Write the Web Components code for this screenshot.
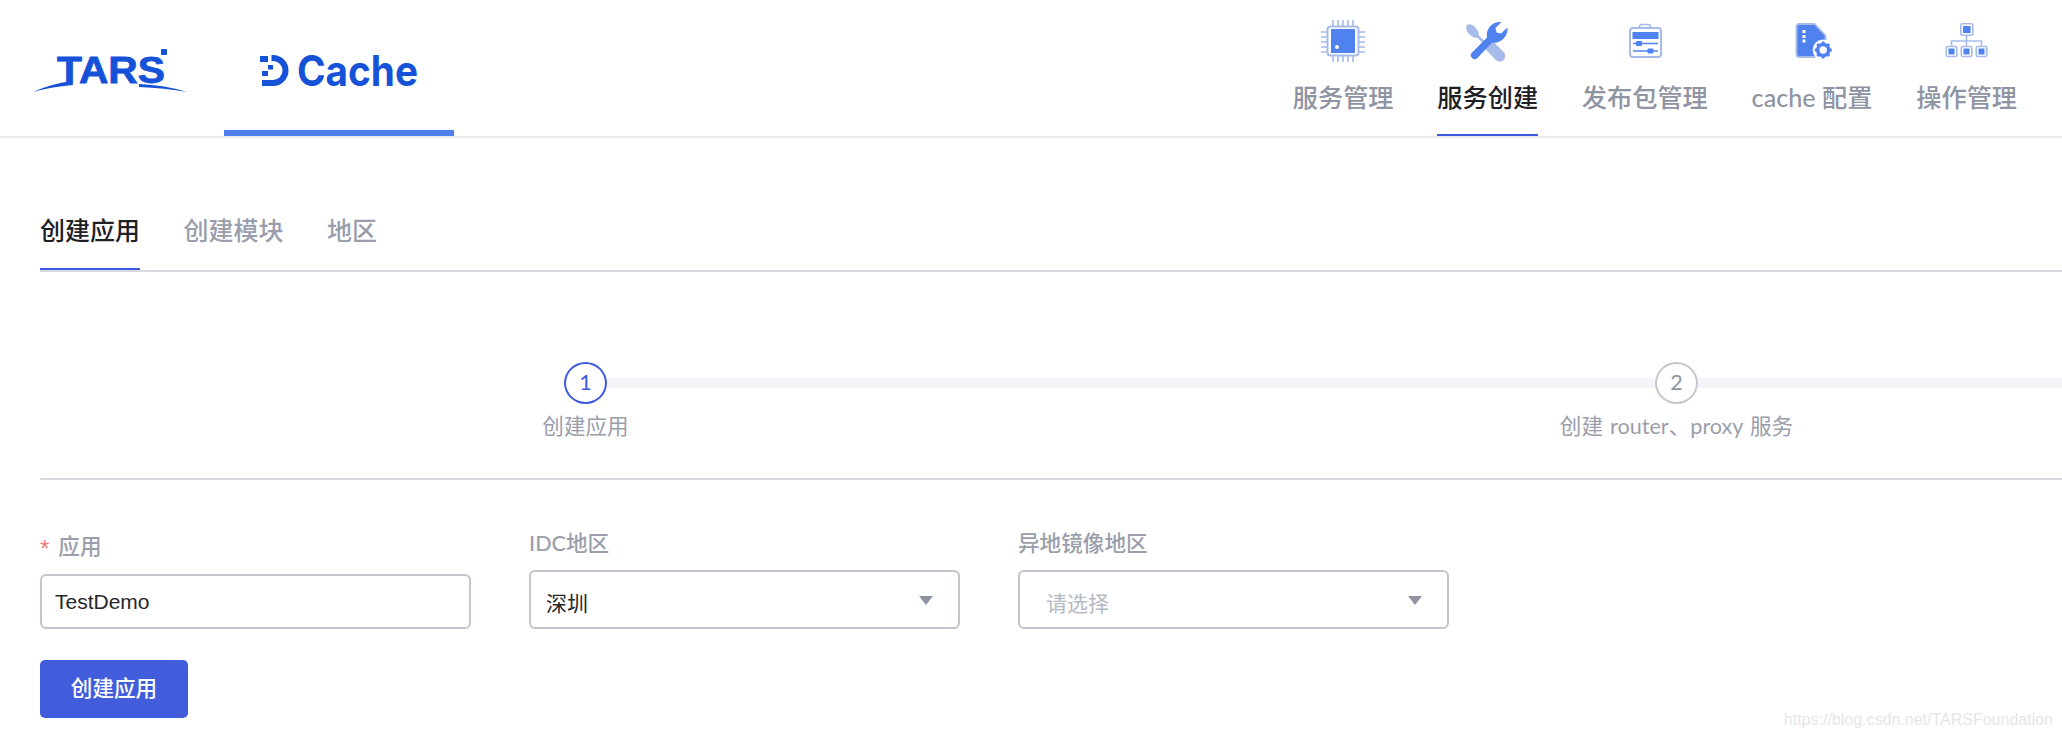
<!DOCTYPE html>
<html lang="zh">
<head>
<meta charset="utf-8">
<title>DCache</title>
<style>
  html, body { margin: 0; height: 738px; overflow: hidden; background: #fff; }
  body { position: relative; font-family: Lato, "Noto Sans CJK SC", sans-serif; color: #8f94a3; }
  .nav-icon { display: block; width: 44px; height: 44px; }
</style>
</head>
<body>
<app-header>
  <nav-item>
    <svg slot="icon" class="nav-icon" viewBox="0 0 44 44">
      <g stroke="#a6bbea" stroke-width="1.6" fill="none">
        <path d="M12 0v6M17 0v6M22 0v6M27 0v6M32 0v6M12 36v6M17 36v6M22 36v6M27 36v6M32 36v6M0 12h6M0 17h6M0 22h6M0 27h6M0 32h6M38 12h6M38 17h6M38 22h6M38 27h6M38 32h6"/>
        <rect x="6.5" y="6.5" width="31" height="29" rx="3" fill="#fff" stroke-width="2"/>
      </g>
      <rect x="10" y="9" width="24" height="24" fill="#4f82ee"/>
      <circle cx="16" cy="27" r="2" fill="#fff"/>
    </svg>
    服务管理
  </nav-item>
  <nav-item active>
    <svg slot="icon" class="nav-icon" viewBox="0 0 44 44">
      <path d="M7 12 L33.5 36.5" stroke="#a6bbea" stroke-width="2.6" fill="none"/>
      <ellipse cx="6.5" cy="11" rx="8" ry="4.6" transform="rotate(48 6.5 11)" fill="#a6bbea"/>
      <path d="M24.5 26.7 L33.8 36" stroke="#a6bbea" stroke-width="11" stroke-linecap="round" fill="none"/>
      <path d="M6 32.5 L21 17.5 C19.5 9 26 1 35.5 2 L29.5 8 L30.5 12.5 L35 13.5 L41.5 7.5 C42.5 17 34 24 26 22.5 L11.5 38 A3.8 3.8 0 0 1 6 32.5Z" fill="#4f82ee"/>
    </svg>
    服务创建
  </nav-item>
  <nav-item>
    <svg slot="icon" class="nav-icon" viewBox="0 0 44 44">
      <path d="M16.5 8 V7 a2.5 2.5 0 0 1 2.5 -2.5 h6 a2.5 2.5 0 0 1 2.5 2.5 V8" fill="none" stroke="#a6bbea" stroke-width="1.6"/>
      <rect x="7" y="8" width="31" height="29" rx="3" fill="#fff" stroke="#a6bbea" stroke-width="2"/>
      <rect x="9.5" y="12" width="26" height="7" fill="#4f82ee"/>
      <path d="M10 23.5h25M10 31h25" stroke="#4f82ee" stroke-width="1.5"/>
      <rect x="13" y="21" width="6" height="5" rx="1" fill="#4f82ee"/>
      <rect x="24.5" y="28.5" width="6" height="5" rx="1" fill="#4f82ee"/>
    </svg>
    发布包管理
  </nav-item>
  <nav-item>
    <svg slot="icon" class="nav-icon" viewBox="0 0 44 44">
      <path d="M9.5 4 H24.5 L35.5 15.5 V34 a3 3 0 0 1 -3 3 H9.5 a3 3 0 0 1 -3 -3 V7 a3 3 0 0 1 3 -3Z" fill="#4f82ee" stroke="#a6bbea" stroke-width="1.8"/>
      <path d="M12.5 10h3v3h-3zM12.5 15h3v3h-3zM12.5 19.5h3v3h-3z" fill="#fff"/>
      <circle cx="33.2" cy="30" r="10.5" fill="#fff"/>
      <circle cx="33.2" cy="30" r="5.5" fill="none" stroke="#4f82ee" stroke-width="3.6"/>
      <path d="M33.2 21.5v3M33.2 35.5v3M24.7 30h3M38.7 30h3M27.2 24l2.1 2.1M37.1 33.9l2.1 2.1M27.2 36l2.1-2.1M37.1 26.1l2.1-2.1" stroke="#4f82ee" stroke-width="2.8"/>
    </svg>
    cache 配置
  </nav-item>
  <nav-item>
    <svg slot="icon" class="nav-icon" viewBox="0 0 44 44">
      <path d="M21.5 15.7 V25.7 M6.5 25.7 V21 H36.5 V25.7" fill="none" stroke="#a6bbea" stroke-width="1.6"/>
      <g fill="#fff" stroke="#a6bbea" stroke-width="1.6">
        <rect x="15.8" y="3.8" width="12" height="11.5" rx="1.5"/>
        <rect x="1.3" y="26.5" width="10.5" height="10" rx="1.5"/>
        <rect x="16.3" y="26.5" width="10.5" height="10" rx="1.5"/>
        <rect x="31.3" y="26.5" width="10.5" height="10" rx="1.5"/>
      </g>
      <g fill="#4f82ee">
        <rect x="18" y="6" width="7.6" height="7"/>
        <rect x="3.5" y="28.5" width="6" height="6"/>
        <rect x="18.5" y="28.5" width="6" height="6"/>
        <rect x="33.5" y="28.5" width="6" height="6"/>
      </g>
    </svg>
    操作管理
  </nav-item>
</app-header>
<main-panel>
  <tab-bar>
    <tab-item active>创建应用</tab-item>
    <tab-item>创建模块</tab-item>
    <tab-item>地区</tab-item>
  </tab-bar>
  <step-bar>
    <step-item number="1" active>创建应用</step-item>
    <step-item number="2">创建 router、proxy 服务</step-item>
  </step-bar>
  <form-row>
    <form-field label="应用" required><text-box>TestDemo</text-box></form-field>
    <form-field label="IDC地区"><select-box>深圳</select-box></form-field>
    <form-field label="异地镜像地区"><select-box placeholder>请选择</select-box></form-field>
  </form-row>
  <primary-button>创建应用</primary-button>
</main-panel>
<water-mark>https://blog.csdn.net/TARSFoundation</water-mark>
<script>
class AppHeader extends HTMLElement {
  constructor() {
    super();
    this.shadowDOM = this.attachShadow({ mode: 'open' });
  }

  connectedCallback() {
    this.shadowDOM.innerHTML = `
      <style>
        :host { display: flex; height: 136px; border-bottom: 2px solid #ececec; padding-left: 33px; padding-right: 45px; }
        svg { overflow: visible; }
        .tars { display: block; width: 154px; height: 46px; margin-top: 49px; }
        .dcache { box-sizing: border-box; width: 230px; height: 136px; margin-left: 37px; padding: 55px 36px 0; border-bottom: 6px solid #5080ee; }
        .dcache svg { display: block; width: 158px; height: 32px; }
        nav { display: flex; gap: 43.8px; margin-left: auto; }
      </style>
      <svg class="tars" viewBox="33 49 154 46">
        <text x="57" y="83" textLength="108" lengthAdjust="spacingAndGlyphs" font-family="Liberation Sans" font-weight="700" font-size="36" fill="#1552d8" stroke="#1552d8" stroke-width="0.8">TARS</text>
        <rect x="161" y="49" width="6" height="6" rx="1" fill="#1552d8"/>
        <path d="M33 92 Q50 84 72 81 L73 85 Q50 87 33 92Z M139 84 Q165 85 187 92 Q165 88 139 87Z" fill="#1552d8"/>
      </svg>
      <div class="dcache">
        <svg viewBox="260 55 158 32">
          <rect x="260" y="56" width="8" height="6" fill="#1552d8"/>
          <rect x="268" y="65" width="5" height="4.5" fill="#1552d8"/>
          <rect x="262" y="71" width="6" height="5" fill="#1552d8"/>
          <path d="M271.5 58 H273 A12.5 12.5 0 0 1 273 83 H262" fill="none" stroke="#1552d8" stroke-width="6"/>
          <text x="297" y="86" textLength="121" lengthAdjust="spacingAndGlyphs" font-family="Inter" font-weight="650" font-size="42.5" fill="#1552d8">Cache</text>
        </svg>
      </div>
      <nav><slot></slot></nav>
    `;
  }
}

class NavItem extends HTMLElement {
  constructor() {
    super();
    this.shadowDOM = this.attachShadow({ mode: 'open' });
  }

  connectedCallback() {
    this.shadowDOM.innerHTML = `
      <style>
        :host { box-sizing: border-box; display: flex; flex-direction: column; align-items: center; height: 136px; padding-top: 20px; font-size: 25.2px; font-weight: 500; line-height: 34px; color: #8f94a3; white-space: nowrap; }
        :host([active]) { color: #1f2026; border-bottom: 2px solid #3f5ae0; }
        .label { margin-top: 16px; }
      </style>
      <slot name="icon"></slot>
      <div class="label"><slot></slot></div>
    `;
  }
}

class MainPanel extends HTMLElement {
  constructor() {
    super();
    this.attachShadow({ mode: 'open' }).innerHTML = `
      <style>
        :host { display: block; padding-left: 40px; overflow: hidden; }
      </style>
      <slot></slot>
    `;
  }
}

class TabBar extends HTMLElement {
  constructor() {
    super();
    this.attachShadow({ mode: 'open' }).innerHTML = `
      <style>
        :host { display: flex; gap: 43.5px; margin-top: 73px; border-bottom: 2px solid #d8d9df; }
      </style>
      <slot></slot>
    `;
  }
}

class TabItem extends HTMLElement {
  constructor() {
    super();
    this.attachShadow({ mode: 'open' }).innerHTML = `
      <style>
        :host { display: block; height: 59px; font-size: 25px; font-weight: 500; line-height: 38px; color: #9a9eac; border-bottom: 0 solid #3f5ae0; }
        :host([active]) { color: #1f2026; border-bottom-width: 2px; height: 57px; }
      </style>
      <slot></slot>
    `;
  }
}

class StepBar extends HTMLElement {
  constructor() {
    super();
    this.attachShadow({ mode: 'open' }).innerHTML = `
      <style>
        :host { display: flex; margin-top: 90px; padding-bottom: 37px; border-bottom: 2px solid #d8d9df; }
      </style>
      <slot></slot>
    `;
  }
}

class StepItem extends HTMLElement {
  constructor() {
    super();
    this.shadowDOM = this.attachShadow({ mode: 'open' });
  }

  connectedCallback() {
    this.shadowDOM.innerHTML = `
      <style>
        :host { flex: none; display: block; width: 1091px; font-size: 21.6px; word-spacing: 1.5px; color: #9a9eac; }
        .head { display: flex; align-items: center; }
        .line { flex: 1; height: 10px; background: #f4f5f9; }
        :host([active]) .line:first-child { background: transparent; }
        .dot { box-sizing: border-box; width: 43px; height: 42px; border: 2px solid #c4c7d0; border-radius: 50%; display: flex; align-items: center; justify-content: center; line-height: 1; color: #8f94a3; }
        :host([active]) .dot { border-color: #3f5ae0; color: #3f5ae0; }
        .text { margin-top: 7px; line-height: 30px; text-align: center; white-space: nowrap; }
      </style>
      <div class="head">
        <div class="line"></div>
        <div class="dot">${this.getAttribute('number')}</div>
        <div class="line"></div>
      </div>
      <div class="text"><slot></slot></div>
    `;
  }
}

class FormRow extends HTMLElement {
  constructor() {
    super();
    this.attachShadow({ mode: 'open' }).innerHTML = `
      <style>
        :host { display: flex; align-items: flex-end; gap: 58px; margin-top: 48px; }
      </style>
      <slot></slot>
    `;
  }
}

class FormField extends HTMLElement {
  constructor() {
    super();
    this.shadowDOM = this.attachShadow({ mode: 'open' });
  }

  connectedCallback() {
    const star = this.hasAttribute('required') ? '<span class="star">*</span>' : '';
    this.shadowDOM.innerHTML = `
      <style>
        :host { display: block; width: 431px; }
        .label { font-size: 21.6px; font-weight: 500; line-height: 30px; color: #9a9eac; margin-bottom: 12px; white-space: nowrap; }
        :host([required]) .label { margin-bottom: 13px; }
        .star { font: 24px/1 "Liberation Sans", sans-serif; vertical-align: -3px; color: #f07c7c; margin-right: 9px; }
      </style>
      <div class="label">${star}${this.getAttribute('label')}</div>
      <slot></slot>
    `;
  }
}

class TextBox extends HTMLElement {
  constructor() {
    super();
    this.attachShadow({ mode: 'open' }).innerHTML = `
      <style>
        :host { box-sizing: border-box; display: flex; align-items: center; height: 55px; padding: 0 13px; border: 2px solid #c2c5cd; border-radius: 6px; font: 21px "Liberation Sans", sans-serif; color: #26272b; }
      </style>
      <slot></slot>
    `;
  }
}

class SelectBox extends HTMLElement {
  constructor() {
    super();
    this.attachShadow({ mode: 'open' }).innerHTML = `
      <style>
        :host { box-sizing: border-box; display: flex; align-items: center; justify-content: space-between; height: 59px; padding: 4px 25px 0 15px; border: 2px solid #c2c5cd; border-radius: 6px; font-size: 21px; color: #26272b; }
        :host([placeholder]) { padding-left: 26px; color: #b5b9c4; }
        .arrow { width: 0; height: 0; margin-top: -3px; border-style: solid; border-width: 9px 7px 0; border-color: #8f94a3 transparent transparent; }
      </style>
      <div><slot></slot></div>
      <span class="arrow"></span>
    `;
  }
}

class PrimaryButton extends HTMLElement {
  constructor() {
    super();
    this.attachShadow({ mode: 'open' }).innerHTML = `
      <style>
        :host { box-sizing: border-box; display: flex; align-items: center; justify-content: center; width: 148px; height: 58px; margin-top: 31px; padding-bottom: 5px; background: #415ddc; border-radius: 5px; color: #fff; font-size: 21.6px; font-weight: 500; }
      </style>
      <slot></slot>
    `;
  }
}

class WaterMark extends HTMLElement {
  constructor() {
    super();
    this.attachShadow({ mode: 'open' }).innerHTML = `
      <style>
        :host { position: absolute; right: 9px; top: 709px; font: 16px/22px "Liberation Sans", sans-serif; color: #e6e6e6; }
      </style>
      <slot></slot>
    `;
  }
}

customElements.define('app-header', AppHeader);
customElements.define('nav-item', NavItem);
customElements.define('main-panel', MainPanel);
customElements.define('tab-bar', TabBar);
customElements.define('tab-item', TabItem);
customElements.define('step-bar', StepBar);
customElements.define('step-item', StepItem);
customElements.define('form-row', FormRow);
customElements.define('form-field', FormField);
customElements.define('text-box', TextBox);
customElements.define('select-box', SelectBox);
customElements.define('primary-button', PrimaryButton);
customElements.define('water-mark', WaterMark);
</script>
</body>
</html>
